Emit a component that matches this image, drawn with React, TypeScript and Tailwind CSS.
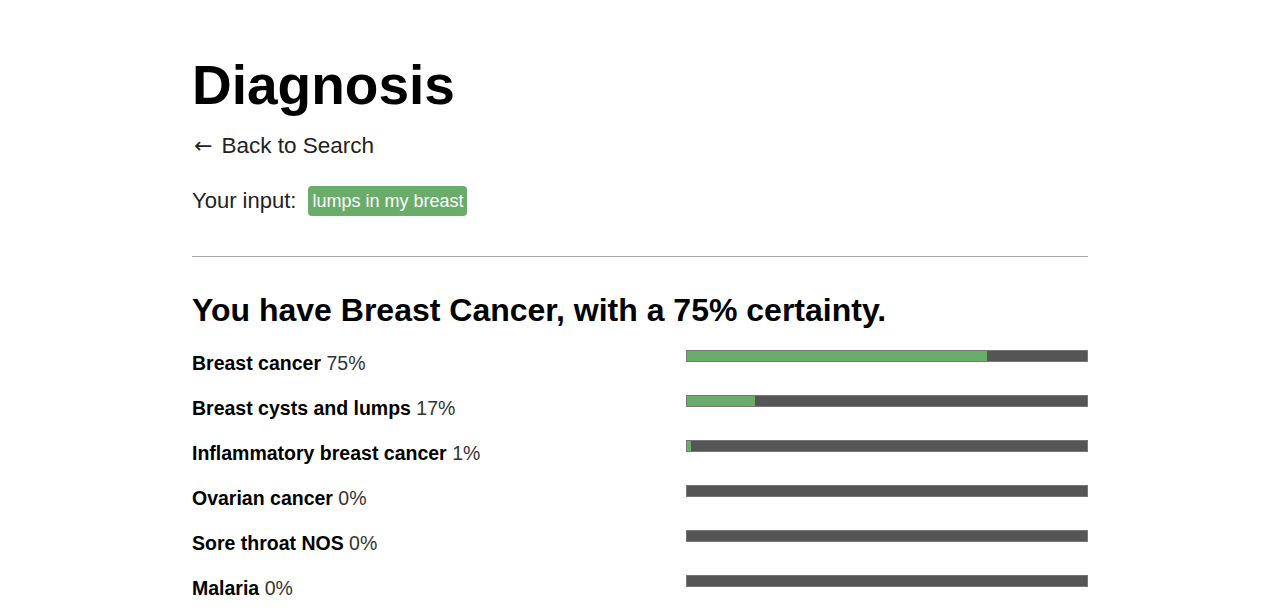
const diagnoses = [
  { name: "Breast cancer", value: 75 },
  { name: "Breast cysts and lumps", value: 17 },
  { name: "Inflammatory breast cancer", value: 1 },
  { name: "Ovarian cancer", value: 0 },
  { name: "Sore throat NOS", value: 0 },
  { name: "Malaria", value: 0 },
];

function ResultRow({ name, value }: { name: string; value: number }) {
  return (
    <div className="flex h-[45px] items-start">
      <div className="w-[494px] text-[19.5px] leading-[24px] pt-[1px]">
        <span className="font-bold">{name}</span>{" "}
        <span className="text-[#333]">{value}%</span>
      </div>
      <div className="flex-1 h-[12px] border border-[#777] bg-[#555]">
        <div className="h-full bg-[#6aad6a]" style={{ width: `${value}%` }} />
      </div>
    </div>
  );
}

export default function App() {
  return (
    <div className="min-h-screen bg-white text-black font-['Liberation_Sans',Arial,sans-serif]">
      <div className="mx-auto w-[896px] pt-[52px]">
        <h1 className="text-[55px] font-bold leading-[66px]">Diagnosis</h1>
        <a className="mt-[13px] flex items-center text-[22.5px] leading-[30px] text-[#222]" href="#">
          <span className="mr-[9px] ml-[2px] font-['DejaVu_Sans',sans-serif] text-[22px]">←</span>
          Back to Search
        </a>
        <div className="mt-[23px] flex items-center gap-[12px] text-[22px] text-[#222]">
          <span>Your input:</span>
          <span className="rounded-[4px] bg-[#6aad6a] px-[4px] py-[3px] text-[18px] leading-[24px] text-white">
            lumps in my breast
          </span>
        </div>
        <hr className="mt-[39px] border-t-[1.5px] border-[#aaa]" />
        <h2 className="mt-[33px] text-[32px] font-bold leading-[40px]">
          You have Breast Cancer, with a 75% certainty.
        </h2>
        <div className="mt-[20px]">
          {diagnoses.map((d) => (
            <ResultRow key={d.name} name={d.name} value={d.value} />
          ))}
        </div>
      </div>
    </div>
  );
}
